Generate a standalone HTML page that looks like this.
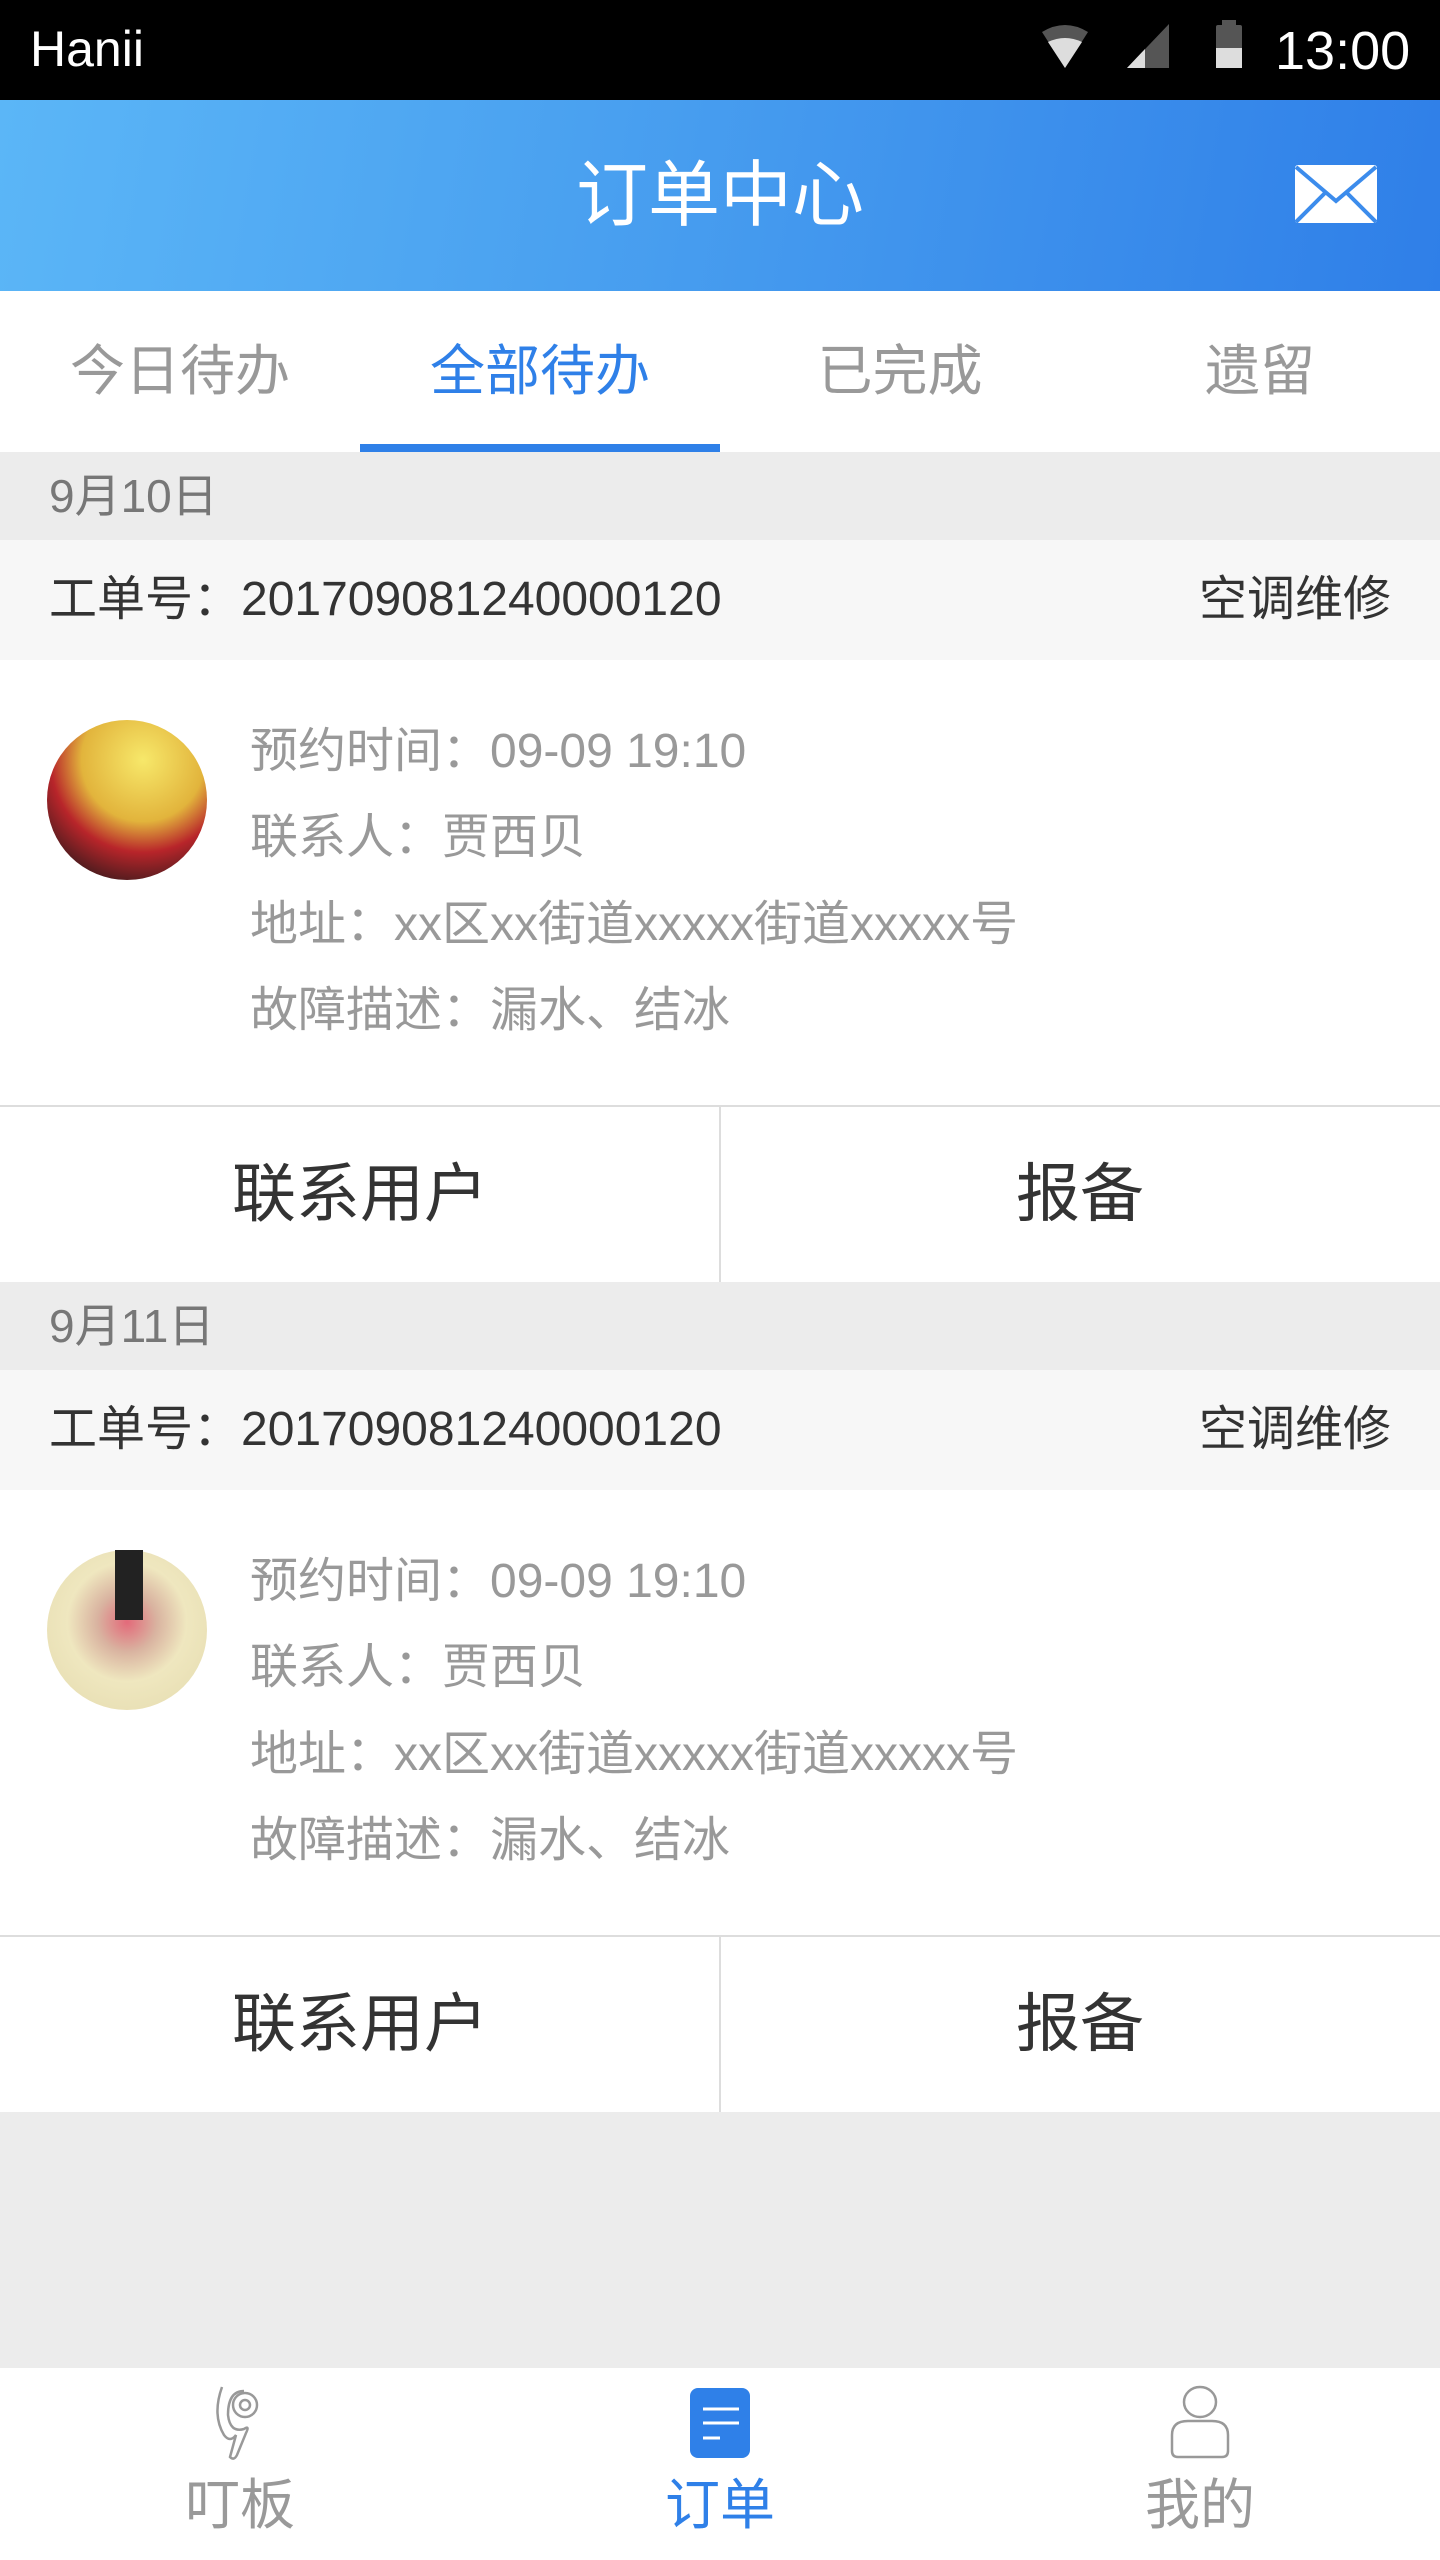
<!DOCTYPE html>
<html><head><meta charset="utf-8"><style>
*{margin:0;padding:0;box-sizing:border-box}
body{width:1440px;height:2560px;position:relative;background:#ececec;font-family:"Liberation Sans","Noto Sans CJK SC",sans-serif;overflow:hidden}
.a{position:absolute}
.t{position:absolute;white-space:nowrap;line-height:1}
</style></head><body>
<div class="a" style="left:0;top:0;width:1440px;height:100px;background:#000"></div>
<div class="t" style="left:30px;top:24px;font-size:50px;color:#fff">Hanii</div>
<svg class="a" style="left:1040px;top:24px" width="50" height="44" viewBox="0 0 50 44"><path d="M2 8 Q25 -6 48 8 L25 44 Z" fill="#555"/><path d="M8 18 Q25 10 42 18 L25 44Z" fill="#ddd"/></svg>
<svg class="a" style="left:1127px;top:24px" width="42" height="44"><path d="M0 44 L42 0 L42 44Z" fill="#555"/><path d="M0 44 L18 25 L18 44Z" fill="#ddd"/></svg>
<svg class="a" style="left:1214px;top:20px" width="30" height="48"><rect x="8" y="0" width="14" height="6" fill="#555"/><rect x="2" y="5" width="26" height="43" rx="2" fill="#555"/><rect x="2" y="28" width="26" height="20" fill="#ddd"/></svg>
<div class="t" style="left:1275px;top:24px;font-size:54px;color:#fff">13:00</div>

<div class="a" style="left:0;top:100px;width:1440px;height:191px;background:linear-gradient(100deg,#5bb6f7,#4aa1f0 40%,#2f7fe8)"></div>
<div class="t" style="left:0;width:1440px;text-align:center;top:160px;font-size:72px;color:#fff">订单中心</div>
<svg class="a" style="left:1295px;top:165px" width="82" height="58" viewBox="0 0 82 58"><rect width="82" height="58" rx="3" fill="#fff"/><path d="M1 2 L41 36 L81 2 M1 57 L30 28 M81 57 L52 28" stroke="#3c8cec" stroke-width="4" fill="none"/></svg>

<div class="a" style="left:0;top:291px;width:1440px;height:161px;background:#fff"></div>
<div class="t" style="left:0;width:360px;text-align:center;top:344px;font-size:55px;color:#999">今日待办</div>
<div class="t" style="left:360px;width:360px;text-align:center;top:344px;font-size:55px;color:#2f80e8">全部待办</div>
<div class="t" style="left:720px;width:360px;text-align:center;top:344px;font-size:55px;color:#999">已完成</div>
<div class="t" style="left:1080px;width:360px;text-align:center;top:344px;font-size:55px;color:#999">遗留</div>
<div class="a" style="left:360px;top:444px;width:360px;height:8px;background:#2f80e8"></div>

<!-- card 1 -->
<div class="a" style="left:0;top:452px;width:1440px;height:830px">
<div class="t" style="left:49px;top:21px;font-size:46px;color:#777">9月10日</div>
<div class="a" style="left:0;top:88px;width:1440px;height:120px;background:#f7f7f7"></div>
<div class="t" style="left:49px;top:124px;font-size:48px;color:#333">工单号：201709081240000120</div>
<div class="t" style="right:49px;top:124px;font-size:48px;color:#333">空调维修</div>
<div class="a" style="left:0;top:208px;width:1440px;height:445px;background:#fff"></div>
<div class="a" style="left:47px;top:268px;width:160px;height:160px;border-radius:50%;background:radial-gradient(circle at 60% 25%,#f7e86a,#e2b43c 40%,#b8252a 60%,#3a1a1c 85%)"></div>
<div class="t" style="left:250px;top:276px;font-size:48px;color:#999">预约时间：09-09 19:10</div>
<div class="t" style="left:250px;top:362px;font-size:48px;color:#999">联系人：贾西贝</div>
<div class="t" style="left:250px;top:449px;font-size:48px;color:#999">地址：xx区xx街道xxxxx街道xxxxx号</div>
<div class="t" style="left:250px;top:535px;font-size:48px;color:#999">故障描述：漏水、结冰</div>
<div class="a" style="left:0;top:653px;width:1440px;height:177px;background:#fff;border-top:2px solid #ddd"></div>
<div class="a" style="left:719px;top:653px;width:2px;height:177px;background:#ddd"></div>
<div class="t" style="left:0;width:720px;text-align:center;top:710px;font-size:64px;color:#333">联系用户</div>
<div class="t" style="left:720px;width:720px;text-align:center;top:710px;font-size:64px;color:#333">报备</div>
</div>

<!-- card 2 -->
<div class="a" style="left:0;top:1282px;width:1440px;height:830px">
<div class="t" style="left:49px;top:21px;font-size:46px;color:#777">9月11日</div>
<div class="a" style="left:0;top:88px;width:1440px;height:120px;background:#f7f7f7"></div>
<div class="t" style="left:49px;top:124px;font-size:48px;color:#333">工单号：201709081240000120</div>
<div class="t" style="right:49px;top:124px;font-size:48px;color:#333">空调维修</div>
<div class="a" style="left:0;top:208px;width:1440px;height:445px;background:#fff"></div>
<div class="a" style="left:47px;top:268px;width:160px;height:160px;border-radius:50%;background:radial-gradient(circle at 50% 45%,#e36a7a 0,#d9b3a0 25%,#efe7bf 50%,#e8dfb4 80%)"></div>
<div class="a" style="left:115px;top:268px;width:28px;height:70px;background:#222"></div>
<div class="t" style="left:250px;top:276px;font-size:48px;color:#999">预约时间：09-09 19:10</div>
<div class="t" style="left:250px;top:362px;font-size:48px;color:#999">联系人：贾西贝</div>
<div class="t" style="left:250px;top:449px;font-size:48px;color:#999">地址：xx区xx街道xxxxx街道xxxxx号</div>
<div class="t" style="left:250px;top:535px;font-size:48px;color:#999">故障描述：漏水、结冰</div>
<div class="a" style="left:0;top:653px;width:1440px;height:177px;background:#fff;border-top:2px solid #ddd"></div>
<div class="a" style="left:719px;top:653px;width:2px;height:177px;background:#ddd"></div>
<div class="t" style="left:0;width:720px;text-align:center;top:710px;font-size:64px;color:#333">联系用户</div>
<div class="t" style="left:720px;width:720px;text-align:center;top:710px;font-size:64px;color:#333">报备</div>
</div>

<!-- bottom nav -->
<div class="a" style="left:0;top:2368px;width:1440px;height:192px;background:#fff"></div>
<svg class="a" style="left:210px;top:2385px" width="60" height="76" viewBox="0 0 60 76"><g fill="none" stroke="#999" stroke-width="2.5"><path d="M12 2 Q2 30 14 50 Q20 58 26 50 L20 72 Q24 76 27 70 L36 48 Q40 40 34 44 Q20 48 18 30 Q18 6 34 6"/><circle cx="35" cy="20" r="12"/><circle cx="35" cy="20" r="5"/></g></svg>
<div class="t" style="left:120px;width:240px;text-align:center;top:2478px;font-size:55px;color:#999">叮板</div>
<svg class="a" style="left:690px;top:2388px" width="60" height="70"><rect width="60" height="70" rx="8" fill="#2f80e8"/><path d="M13 21h36M13 35h36M13 50h17" stroke="#fff" stroke-width="3"/></svg>
<div class="t" style="left:600px;width:240px;text-align:center;top:2478px;font-size:55px;color:#2f80e8">订单</div>
<svg class="a" style="left:1168px;top:2385px" width="64" height="76" viewBox="0 0 64 76"><g fill="none" stroke="#999" stroke-width="2.5"><ellipse cx="32" cy="17" rx="16" ry="15"/><path d="M4 50 Q4 36 20 36 L44 36 Q60 36 60 50 L60 66 Q60 72 54 72 L10 72 Q4 72 4 66Z"/></g></svg>
<div class="t" style="left:1080px;width:240px;text-align:center;top:2478px;font-size:55px;color:#999">我的</div>
</body></html>
